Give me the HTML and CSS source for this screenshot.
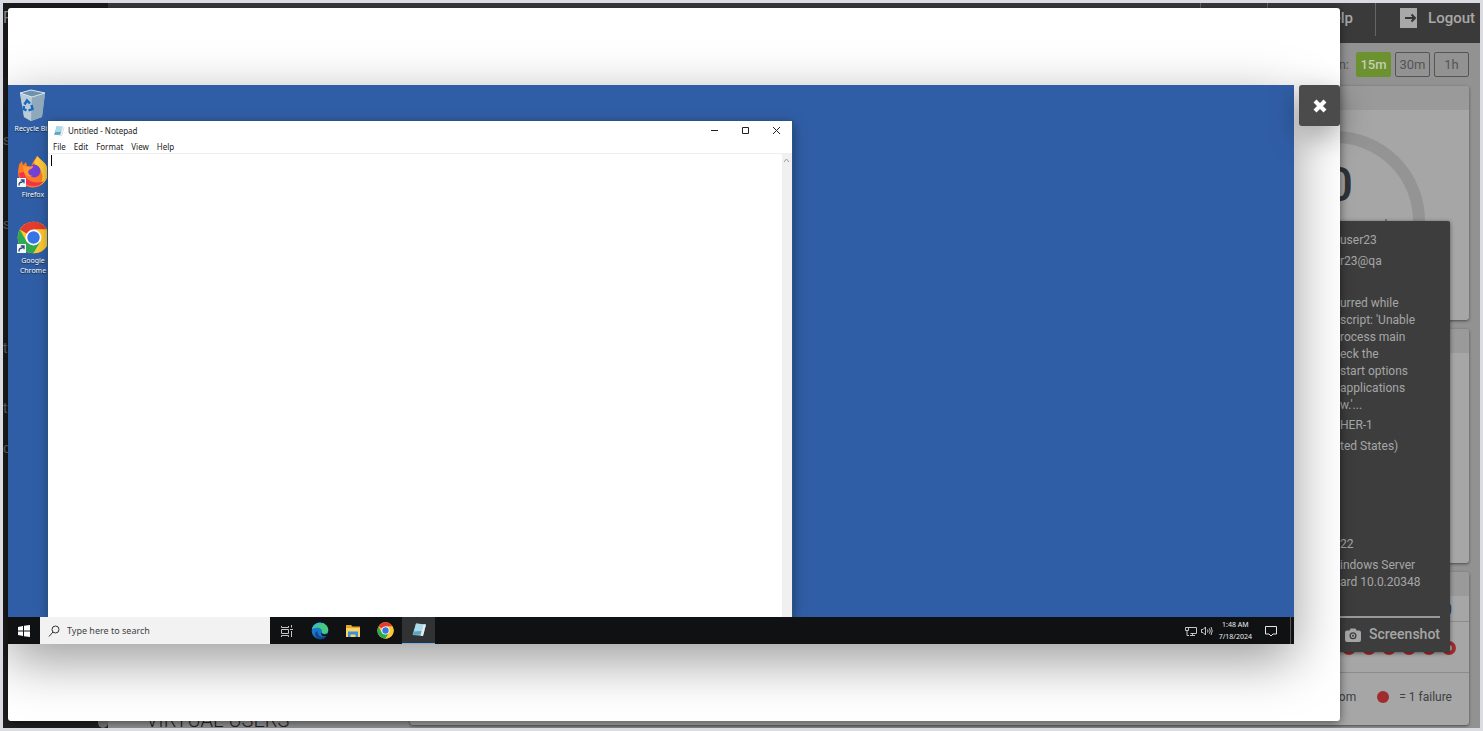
FILE: index.html
```html
<!DOCTYPE html>
<html lang="en">
<head>
  <meta charset="UTF-8" />
  <meta name="viewport" content="width=device-width, initial-scale=1" />
  <title>Dashboard</title>
  <link rel="stylesheet" href="styles.css">
</head>
<body>
  <!-- shared icons -->
  <svg class="defs" width="0" height="0" aria-hidden="true">
    <symbol id="chrome" viewBox="0 0 48 48">
      <circle cx="24" cy="24" r="23" fill="#fcc934"/>
      <path d="M24 24 4.100 12.500A23 23 0 0 1 43.900 12.500H24z" fill="#e33b2e"/>
      <path d="M4.100 12.500A23 23 0 0 0 24 47L34 30 24 24 14 30z" fill="#2da94f"/>
      <path d="M24 12.500H43.900A23 23 0 0 1 24 47L34 30z" fill="#fcc934"/>
      <circle cx="24" cy="24" r="11.500" fill="#fff"/>
      <circle cx="24" cy="24" r="9" fill="#3674e8"/>
    </symbol>
    <symbol id="notepad" viewBox="0 0 16 16">
      <path d="M5 1.500 15 2.500 12 14 1.500 13z" fill="#79b6c9"/>
      <path d="M5 1.500 12.500 2.300 10 12.500 2 13z" fill="#a9dbe8"/>
      <path d="M2.800 9.500 10.800 9 10 12.500 2 13z" fill="#5fa3bd"/>
      <path d="M12.500 2.300 15 2.500 12 14 9.500 13.500z" fill="#e8eef0"/>
    </symbol>
    <symbol id="shortcut" viewBox="0 0 9 9">
      <path d="M0 0h9v9H0z" fill="#f4f6f9"/>
      <path d="M2 7.500C2 5 3.500 4 5 4M3.800 2H7v3.200M7 2 4.500 4.500" fill="none" stroke="#284d86" stroke-width="1.300"/>
    </symbol>
  </svg>

  <div class="app">
    <nav class="sidebar">
      <div class="brand">F</div>
      <ul>
        <li class="s1">s</li>
        <li class="s2">s</li>
        <li class="s3">to</li>
        <li class="s4">to</li>
        <li class="s5">c</li>
      </ul>
      <span class="thumb"></span>
    </nav>

    <div class="main">
      <header class="topbar">
        <a href="#" class="nav-item" aria-label="Account">
          <svg width="20" height="20" viewBox="0 0 20 20"><circle cx="10" cy="10" r="10" fill="#a8a8a8"/></svg>
        </a>
        <a href="#" class="nav-item">
          <svg width="20" height="20" viewBox="0 0 20 20"><circle cx="10" cy="10" r="10" fill="#a8a8a8"/></svg>
          Help
        </a>
        <a href="#" class="nav-item logout">
          <svg width="18" height="20" viewBox="0 0 18 20">
            <path d="M0 0h17v20H0z" fill="#a8a8a8"/>
            <path d="M5 10h10M11.500 6.500 15 10l-3.500 3.500" fill="none" stroke="#353535" stroke-width="2"/>
          </svg>
          Logout
        </a>
      </header>

      <div class="content">
        <section class="users"><h2>VIRTUAL USERS</h2></section>
        <div class="board">
          <div class="range">
            <span>n:</span>
            <button class="active">15m</button>
            <button>30m</button>
            <button>1h</button>
          </div>

          <section class="card">
            <div class="card-head"></div>
            <svg class="gauge" width="180" height="100" viewBox="0 0 180 100">
              <path d="M6 100V90a84 84 0 0 1 168 0v10" fill="none" stroke="#949494" stroke-width="12"/>
              <text x="108" y="70" text-anchor="end">0</text>
              <path d="M141 88v4" stroke="#44464a"/>
            </svg>
          </section>

          <section class="card">
            <div class="card-head"></div>
          </section>

          <section class="card failures">
            <div class="card-head"></div>
            <div class="count">0</div>
            <div class="dots">
              <i></i><i></i><i></i><i></i><i></i><i></i>
            </div>
            <div class="legend">
              <span>om</span><b></b><span>= 1 failure</span>
            </div>
          </section>
        </div>
      </div>
    </div>

    <aside class="tooltip">
      <p>user23</p>
      <p>r23@qa</p>
      <p class="message">urred while<br>script: 'Unable<br>rocess main<br>eck the<br>start options<br>applications<br>w.'...</p>
      <p>HER-1</p>
      <p>ted States)</p>
      <p class="os">22</p>
      <p>indows Server<br>ard 10.0.20348</p>
      <button class="shot">
        <svg width="16" height="14" viewBox="0 0 16 14">
          <path d="M2 2.500h2.500L5.500.500h5l1 2H14a2 2 0 0 1 2 2V12a2 2 0 0 1-2 2H2a2 2 0 0 1-2-2V4.500a2 2 0 0 1 2-2z" fill="#a6a6a6"/>
          <circle cx="8" cy="7.800" r="3.500" fill="#3d3d3d"/>
          <circle cx="8" cy="7.800" r="2.200" fill="#a6a6a6"/>
          <circle cx="8" cy="7.800" r="1" fill="#3d3d3d"/>
        </svg>
        Screenshot
      </button>
    </aside>

    <div class="modal" role="dialog" aria-label="Screenshot">
      <div class="viewer">
        <div class="desktop">
          <div class="screen">
            <div class="shortcuts">
              <div class="shortcut">
                <svg width="34" height="34" viewBox="0 0 34 34">
                  <path d="M4 4 15 1l14 3-3 24-11 4-7-4z" fill="#a9bfce"/>
                  <path d="M4 4l12 4-1 24-7-4z" fill="#b9ccd8"/>
                  <path d="M16 8l13-4-3 24-11 4z" fill="#8fa8ba"/>
                  <path d="M4 4 15 1l14 3-13 4z" fill="#6e91af" stroke="#d8e3ea" stroke-width="1"/>
                  <path d="M8.500 15.500l2.500-4 3 3M15.500 16l1 4-4 1.500M10.500 21.500 7.500 20l.5-3" fill="none" stroke="#1769c2" stroke-width="2.400"/>
                </svg>
                <span>Recycle Bin</span>
              </div>
              <div class="shortcut">
                <svg width="34" height="34" viewBox="0 0 34 34">
                  <path d="M3 9.500 6 6l1 4 3-3 1 4h4l2-4 4-6c2 4 11 6 11 16a15 15 0 0 1-30 1C2 14 3 12 3 9.500z" fill="#ff7a22"/>
                  <path d="M18 7l3.500-6C24 5 32 8 32 17c0 6-3 11-8 13 4-7 3-14-3-17z" fill="#ffc93a"/>
                  <path d="M3 18c1 9 8 13 14 13 5 0 9-2 11-5-9 4-19 0-20-9z" fill="#f0334f"/>
                  <circle cx="18" cy="16" r="6.500" fill="#7440d8"/>
                  <path d="M7 11l5 1 5-1c0 3-3 3-4 4-2 2 0 6 4 6-6 2-10-3-10-10z" fill="#ff9a28"/>
                  <use href="#shortcut" x="1" y="23" width="9" height="9"/>
                </svg>
                <span>Firefox</span>
              </div>
              <div class="shortcut">
                <svg width="34" height="34" viewBox="0 0 34 34">
                  <use href="#chrome" x="1" y="0" width="33" height="33"/>
                  <use href="#shortcut" x="1" y="23" width="9" height="9"/>
                </svg>
                <span>Google<br>Chrome</span>
              </div>
            </div>

            <div class="notepad">
              <div class="titlebar">
                <svg width="12" height="12"><use href="#notepad"/></svg>
                <span class="title">Untitled - Notepad</span>
                <button aria-label="Minimize"><svg width="9" height="9" viewBox="0 0 9 9"><path d="M1 4.500h7"/></svg></button>
                <button aria-label="Maximize"><svg width="9" height="9" viewBox="0 0 9 9"><path d="M1.500 1.500h6v6h-6z"/></svg></button>
                <button aria-label="Close window"><svg width="9" height="9" viewBox="0 0 9 9"><path d="M1 1l7 7M8 1 1 8"/></svg></button>
              </div>
              <div class="menubar">
                <button>File</button>
                <button>Edit</button>
                <button>Format</button>
                <button>View</button>
                <button>Help</button>
              </div>
              <div class="editor">
                <textarea aria-label="Text editor"></textarea>
                <span class="caret"></span>
                <div class="scroll">
                  <svg width="7" height="5" viewBox="0 0 7 5"><path d="M1 4l2.500-3L6 4" fill="none" stroke="#9a9a9a"/></svg>
                </div>
              </div>
            </div>
          </div>

          <div class="taskbar">
            <button class="start" aria-label="Start">
              <svg width="12" height="12" viewBox="0 0 12 12"><path d="M0 2l5-1v4.500H0zM6 .8 12 0v5.500H6zM0 6.500h5V11l-5-1zM6 6.500h6V12l-6-.8z" fill="#fff"/></svg>
            </button>
            <label class="search">
              <svg width="12" height="12" viewBox="0 0 12 12"><circle cx="7.500" cy="4.500" r="3.500" fill="none" stroke="#333"/><path d="M5 7 1 11.500" stroke="#333"/></svg>
              <input type="text" placeholder="Type here to search" aria-label="Search">
            </label>
            <button class="task" aria-label="Task view">
              <svg width="12" height="12" viewBox="0 0 12 12" fill="none" stroke="#c5c5c5"><path d="M.5 1v1.500h7V1M.5 4.500h7v4h-7zM.5 12v-1.500h7V12M10.500 0v2.500M10.500 6v6M9 4.500h3"/></svg>
            </button>
            <button class="task" aria-label="Edge">
              <svg width="18" height="18" viewBox="0 0 18 18">
                <circle cx="9" cy="9" r="8.300" fill="#1977c9"/>
                <path d="M1 7C2 3 5 .700 9 .700c5 0 8.300 3.500 8.300 7 0 3-2 4-4 4-2 0-3-1-2.500-2C11.500 7 8 4 1 7z" fill="#45c882"/>
                <path d="M1 7C2 3 5 .700 9 .700c2 0 3.500.600 4.500 1.300C9 1.500 5 3 1 7z" fill="#36b6df"/>
                <path d="M6.500 9c0 5 4 7 9 5-2 3-5 3.500-7 3.300C3 16 3 10 6.500 9z" fill="#12478f"/>
                <path d="M10.800 9.700c-.5 1.500 1 2.700 3 2.700 1.500 0 2.500-.6 3.500-1.600-.3 1.500-.8 2.400-1.500 3.200-3 1-7-.5-5-4.300z" fill="#111"/>
              </svg>
            </button>
            <button class="task" aria-label="File Explorer">
              <svg width="16" height="14" viewBox="0 0 16 14">
                <path d="M1 1h5l1.500 1.500H15V13H1z" fill="#e2a52d"/>
                <path d="M1 4h14v9H1z" fill="#fbd369"/>
                <path d="M3 7.500h10V13h-2.500v-2.500h-5V13H3z" fill="#3c8fd6"/>
              </svg>
            </button>
            <button class="task" aria-label="Chrome">
              <svg width="17" height="17"><use href="#chrome"/></svg>
            </button>
            <button class="task running" aria-label="Notepad">
              <svg width="16" height="16"><use href="#notepad"/></svg>
            </button>
            <div class="tray">
              <svg width="12" height="10" viewBox="0 0 12 10" fill="none" stroke="#c5c5c5"><path d="M3.500 2.500V1.500h8v6h-6M7.500 7.500v2M5 9.500h5M.5 1.500h3v3h-3zM2 4.500v5h2"/></svg>
              <svg width="12" height="10" viewBox="0 0 12 10" fill="none" stroke="#c5c5c5"><path d="M.5 3.500H2L4.500 1v8L2 6.500H.500zM6.500 3.500q1 1.500 0 3M8.300 2.300q2 2.700 0 5.400M10 1q2.500 4 0 8"/></svg>
              <div class="clock">1:48 AM<br>7/18/2024</div>
              <svg width="12" height="12" viewBox="0 0 12 12" fill="none" stroke="#e5e5e5"><path d="M.5 1.500h11v7.500H8l-2 2-2-2H.500z"/></svg>
            </div>
          </div>
        </div>

        <button class="close" aria-label="Close">
          <svg width="14" height="14" viewBox="0 0 14 14"><path d="M2 2l10 10M12 2 2 12" stroke="#fff" stroke-width="4.200"/></svg>
        </button>
      </div>
    </div>
  </div>
</body>
</html>
```
FILE: styles.css
```css
* {
  box-sizing: border-box;
}
body {
  margin: 0;
  padding: 3px;
  background: #dadce1;
  font-family: Roboto, "Liberation Sans", sans-serif;
  font-size: 12px;
}
button {
  margin: 0;
  padding: 0;
  border: 0;
  background: none;
  color: inherit;
  font: inherit;
  cursor: pointer;
}
p, h2, ul {
  margin: 0;
  padding: 0;
  list-style: none;
}
svg {
  display: block;
  flex: none;
}
.defs {
  position: absolute;
}
.app {
  position: relative;
  display: flex;
  height: calc(100vh - 6px);
  overflow: hidden;
  background: #929292;
}

/* left menu */
.sidebar {
  display: flex;
  flex-direction: column;
  width: 105px;
  background: #212121;
  color: #777;
  font-size: 14px;
  line-height: 20px;
}
.brand {
  height: 75px;
  padding-top: 5px;
  background: #1d1d1d;
  font-size: 16px;
  color: #999;
}
.sidebar ul {
  flex: 1;
}
.s1 { margin-top: 52px; }
.s2 { margin-top: 64px; }
.s3 { margin-top: 104px; }
.s4 { margin-top: 40px; }
.s5 { margin-top: 20px; }
.thumb {
  align-self: flex-end;
  width: 10px;
  height: 40px;
  border-radius: 5px;
  background: #777;
}

/* header */
.main {
  flex: 1;
  display: flex;
  flex-direction: column;
  min-width: 0;
}
.topbar {
  display: flex;
  justify-content: flex-end;
  height: 40px;
  background: #3a3a3a;
}
.nav-item {
  display: flex;
  align-items: center;
  gap: 10px;
  height: 33px;
  padding: 0 22px 4px 24px;
  border-left: 1px solid #666;
  color: #a8a8a8;
  font-size: 15px;
  font-weight: 500;
  text-decoration: none;
}
.logout {
  padding-right: 5px;
}

/* board */
.content {
  flex: 1;
  display: flex;
  min-height: 0;
}
.users {
  display: flex;
  align-items: flex-end;
  width: 302px;
  padding-left: 38px;
}
.users h2 {
  font-size: 20px;
  font-weight: 300;
  line-height: 16px;
  color: #222;
}
.board {
  flex: 1;
  display: flex;
  flex-direction: column;
  gap: 9px;
  padding: 8px 11px 3px 0;
}
.range {
  display: flex;
  align-items: center;
  justify-content: flex-end;
  gap: 4px;
  height: 26px;
  color: #555;
  font-size: 13px;
}
.range span {
  margin-right: 3px;
}
.range button {
  width: 35px;
  height: 25px;
  border: 1px solid #555;
  border-radius: 2px;
}
.range .active {
  border-color: #6c9230;
  background: #6c9230;
  color: #c5cdb9;
  font-weight: 500;
}
.card {
  height: 234px;
  border-radius: 3px;
  background: #a6a6a6;
  box-shadow: 0 1px 3px rgba(0, 0, 0, 0.5);
  overflow: hidden;
}
.card-head {
  height: 24px;
  background: #9a9a9a;
}
.gauge {
  margin: 21px 44px 0 auto;
}
.gauge text {
  font-size: 48px;
  font-weight: 500;
  fill: #303338;
}
.failures {
  flex: 1;
}
.count {
  height: 26px;
  padding: 4px 17px 0 0;
  border-bottom: 1px solid #8c8c8c;
  color: #23456f;
  font-size: 16px;
  text-align: right;
}
.dots {
  display: flex;
  justify-content: flex-end;
  gap: 6px;
  height: 51px;
  padding: 19px 13px 0;
  border-bottom: 1px solid #8c8c8c;
}
.dots i {
  width: 14px;
  height: 14px;
  border: 4px solid #a02d2e;
  border-radius: 50%;
}
.legend {
  display: flex;
  align-items: center;
  justify-content: flex-end;
  height: 48px;
  padding-right: 17px;
  color: #404040;
  font-size: 12px;
}
.legend b {
  width: 12px;
  height: 12px;
  margin: 0 10px 0 21px;
  border-radius: 50%;
  background: #a02d2e;
}

/* user details */
.tooltip {
  position: absolute;
  top: 218px;
  right: 30px;
  width: 170px;
  padding: 11px 10px 9px 60px;
  border-radius: 2px;
  background: #3d3d3d;
  box-shadow: 0 1px 4px rgba(0, 0, 0, 0.5);
  color: #a6a6a6;
  line-height: 17px;
  white-space: nowrap;
}
.tooltip p {
  margin-bottom: 4px;
}
.tooltip .message {
  margin-top: 25px;
  margin-bottom: 3px;
}
.tooltip .os {
  margin-top: 81px;
}
.shot {
  display: flex;
  align-items: center;
  justify-content: flex-end;
  gap: 8px;
  width: 100%;
  margin-top: 25px;
  padding-top: 8px;
  border-top: 2px solid #999;
  font-size: 14px;
  font-weight: 500;
}

/* screenshot viewer */
.modal {
  position: absolute;
  top: 5px;
  right: 140px;
  bottom: 7px;
  left: 5px;
  display: flex;
  align-items: center;
  border-radius: 3px;
  background: #fff;
  box-shadow: 0 2px 10px rgba(0, 0, 0, 0.5);
}
.viewer {
  flex: 1;
  display: flex;
  align-items: flex-start;
  gap: 5px;
}
.close {
  display: flex;
  align-items: center;
  justify-content: center;
  width: 41px;
  height: 41px;
  border-radius: 3px;
  background: #4b4b4b;
  box-shadow: 0 10px 30px rgba(0, 0, 0, 0.35);
}
.desktop {
  flex: 1;
  display: flex;
  flex-direction: column;
  aspect-ratio: 1286 / 559;
  box-shadow: 0 16px 50px rgba(0, 0, 0, 0.4);
  background: #305ea6;
  font-family: "Noto Sans", "Open Sans", sans-serif;
  font-size: 8px;
}
.screen {
  position: relative;
  flex: 1;
  overflow: hidden;
}
.shortcuts {
  display: flex;
  flex-direction: column;
  width: 50px;
  padding-top: 4px;
}
.shortcut {
  display: flex;
  flex-direction: column;
  align-items: center;
  gap: 1px;
  height: 66px;
  color: #fff;
  font-size: 7px;
  line-height: 10px;
  text-align: center;
  white-space: nowrap;
  text-shadow: 0 1px 1px #123;
}
.notepad {
  position: absolute;
  top: 36px;
  bottom: 0;
  left: 40px;
  display: flex;
  flex-direction: column;
  width: calc(58% - 2px);
  background: #fff;
  color: #222;
  box-shadow: 0 0 0 1px #2a5480, 1px 3px 12px rgba(0, 0, 0, 0.4);
}
.titlebar {
  display: flex;
  align-items: center;
  height: 19px;
  padding-left: 5px;
}
.title {
  flex: 1;
  padding-left: 3px;
}
.titlebar button {
  display: flex;
  justify-content: center;
  width: 31px;
}
.titlebar button svg {
  fill: none;
  stroke: #222;
}
.menubar {
  display: flex;
  gap: 8px;
  height: 14px;
  padding-left: 5px;
  border-bottom: 1px solid #eee;
}
.editor {
  position: relative;
  flex: 1;
  display: flex;
}
.editor textarea {
  flex: 1;
  border: 0;
  padding: 2px;
  outline: 0;
  resize: none;
}
.caret {
  position: absolute;
  top: 1px;
  left: 3px;
  width: 1px;
  height: 11px;
  background: #000;
}
.scroll {
  width: 10px;
  padding: 4px 1px;
  background: #f0f0f0;
}
.taskbar {
  display: flex;
  height: 27px;
  background: #101112;
}
.start {
  display: flex;
  align-items: center;
  justify-content: center;
  width: 32px;
}
.search {
  display: flex;
  align-items: center;
  gap: 7px;
  width: 230px;
  padding-left: 8px;
  background: #f2f2f2;
}
.search input {
  flex: 1;
  min-width: 0;
  border: 0;
  padding: 0;
  background: none;
  font: inherit;
  font-size: 9px;
}
.search input::placeholder {
  color: #444;
}
.task {
  display: flex;
  align-items: center;
  justify-content: center;
  width: 33px;
}
.running {
  background: #303234;
  border-bottom: 1px solid #76b0e6;
}
.tray {
  display: flex;
  align-items: center;
  margin-left: auto;
  margin-right: 3px;
  padding-right: 13px;
  border-right: 1px solid #555;
  gap: 4px;
}
.clock {
  padding: 0 9px 0 2px;
  color: #eee;
  font-size: 7px;
  line-height: 12px;
  text-align: center;
}
```
